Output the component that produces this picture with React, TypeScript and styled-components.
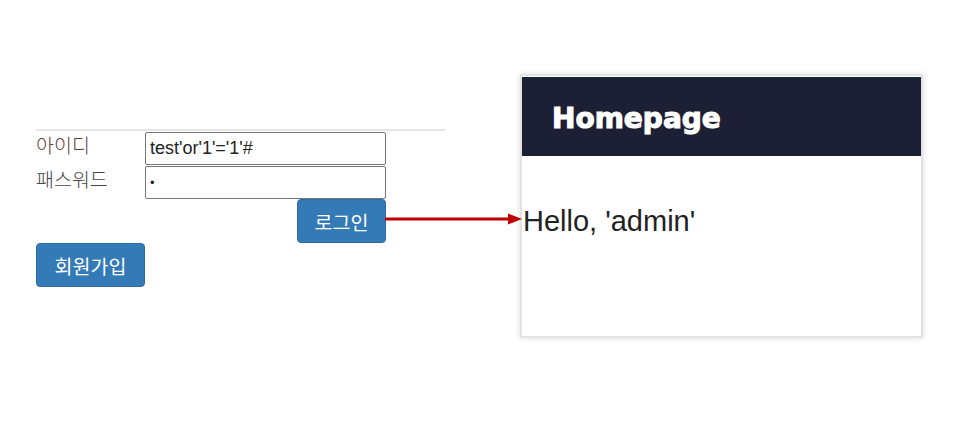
import styled, { createGlobalStyle } from "styled-components";

const GlobalStyle = createGlobalStyle`
  html, body {
    margin: 0;
    padding: 0;
    background: #ffffff;
  }
  body {
    font-family: "Liberation Sans", "Noto Sans CJK KR", Arial, sans-serif;
    color: #333333;
  }
`;

const Page = styled.div`
  position: relative;
  display: flex;
  align-items: flex-start;
  width: 957px;
  height: 442px;
  padding-left: 36px;
  box-sizing: border-box;
`;

const LoginPanel = styled.div`
  width: 409px;
  margin-top: 129px;
  border-top: 2px solid #e6e6e6;
  display: flex;
  flex-direction: column;
`;

const FieldRow = styled.div`
  display: flex;
  align-items: center;
  height: 34px;
`;

const Label = styled.label<{ $tint?: string }>`
  width: 109px;
  font-family: "Noto Sans CJK KR", "Liberation Sans", sans-serif;
  font-size: 19.5px;
  font-weight: 300;
  color: ${(p) => p.$tint ?? "#444444"};
  margin-top: -7px;
`;

const Input = styled.input`
  width: 241px;
  height: 33px;
  box-sizing: border-box;
  border: 1px solid #767676;
  border-radius: 2px;
  padding: 0 4px;
  font-family: "Liberation Sans", Arial, sans-serif;
  font-size: 18px;
  color: #222222;
  outline: none;

  &[type="password"] {
    font-size: 13px;
  }
`;

const ButtonRow = styled.div`
  width: 350px;
  display: flex;
  justify-content: flex-end;
`;

const Button = styled.button<{ $w: number }>`
  width: ${(p) => p.$w}px;
  height: 44px;
  border: 1px solid #2e6da4;
  border-radius: 4px;
  background: #337ab7;
  color: #ffffff;
  font-family: "Noto Sans CJK KR", "Liberation Sans", sans-serif;
  font-size: 19.5px;
  font-weight: 400;
  padding: 0;
  cursor: pointer;
`;

const Card = styled.div`
  margin-top: 74px;
  margin-left: 75px;
  width: 403px;
  height: 264px;
  box-sizing: border-box;
  border: 2px solid #e2e2e2;
  padding-top: 1px;
  background: #ffffff;
  box-shadow: 0 0 6px rgba(0, 0, 0, 0.14);
`;

const CardHeader = styled.div`
  height: 79px;
  background: #1d2034;
  display: flex;
  align-items: center;
  padding-left: 30px;
`;

const Brand = styled.h1`
  margin: 4px 0 0;
  font-family: "DejaVu Sans", "Liberation Sans", sans-serif;
  font-weight: 700;
  font-size: 28px;
  color: #ffffff;
  -webkit-text-stroke: 1.1px #ffffff;
`;

const Greeting = styled.p`
  margin: 49px 0 0 1px;
  font-family: "Liberation Sans", Arial, sans-serif;
  font-size: 29px;
  color: #222222;
`;

const Arrow = styled.svg`
  position: absolute;
  left: 384px;
  top: 212px;
`;

export default function App() {
  return (
    <>
      <GlobalStyle />
      <Page>
        <LoginPanel>
          <FieldRow>
            <Label $tint="#5b3b3b">아이디</Label>
            <Input type="text" defaultValue="test'or'1'='1'#" />
          </FieldRow>
          <FieldRow>
            <Label>패스워드</Label>
            <Input type="password" defaultValue="a" />
          </FieldRow>
          <ButtonRow>
            <Button $w={89}>로그인</Button>
          </ButtonRow>
          <div>
            <Button $w={109}>회원가입</Button>
          </div>
        </LoginPanel>
        <Card>
          <CardHeader>
            <Brand>Homepage</Brand>
          </CardHeader>
          <Greeting>Hello, 'admin'</Greeting>
        </Card>
        <Arrow width="140" height="14" viewBox="0 0 140 14">
          <line x1="1" y1="7" x2="126" y2="7" stroke="#c00000" strokeWidth="3" />
          <polygon points="124,1.5 138,7 124,12.5" fill="#c00000" />
        </Arrow>
      </Page>
    </>
  );
}
